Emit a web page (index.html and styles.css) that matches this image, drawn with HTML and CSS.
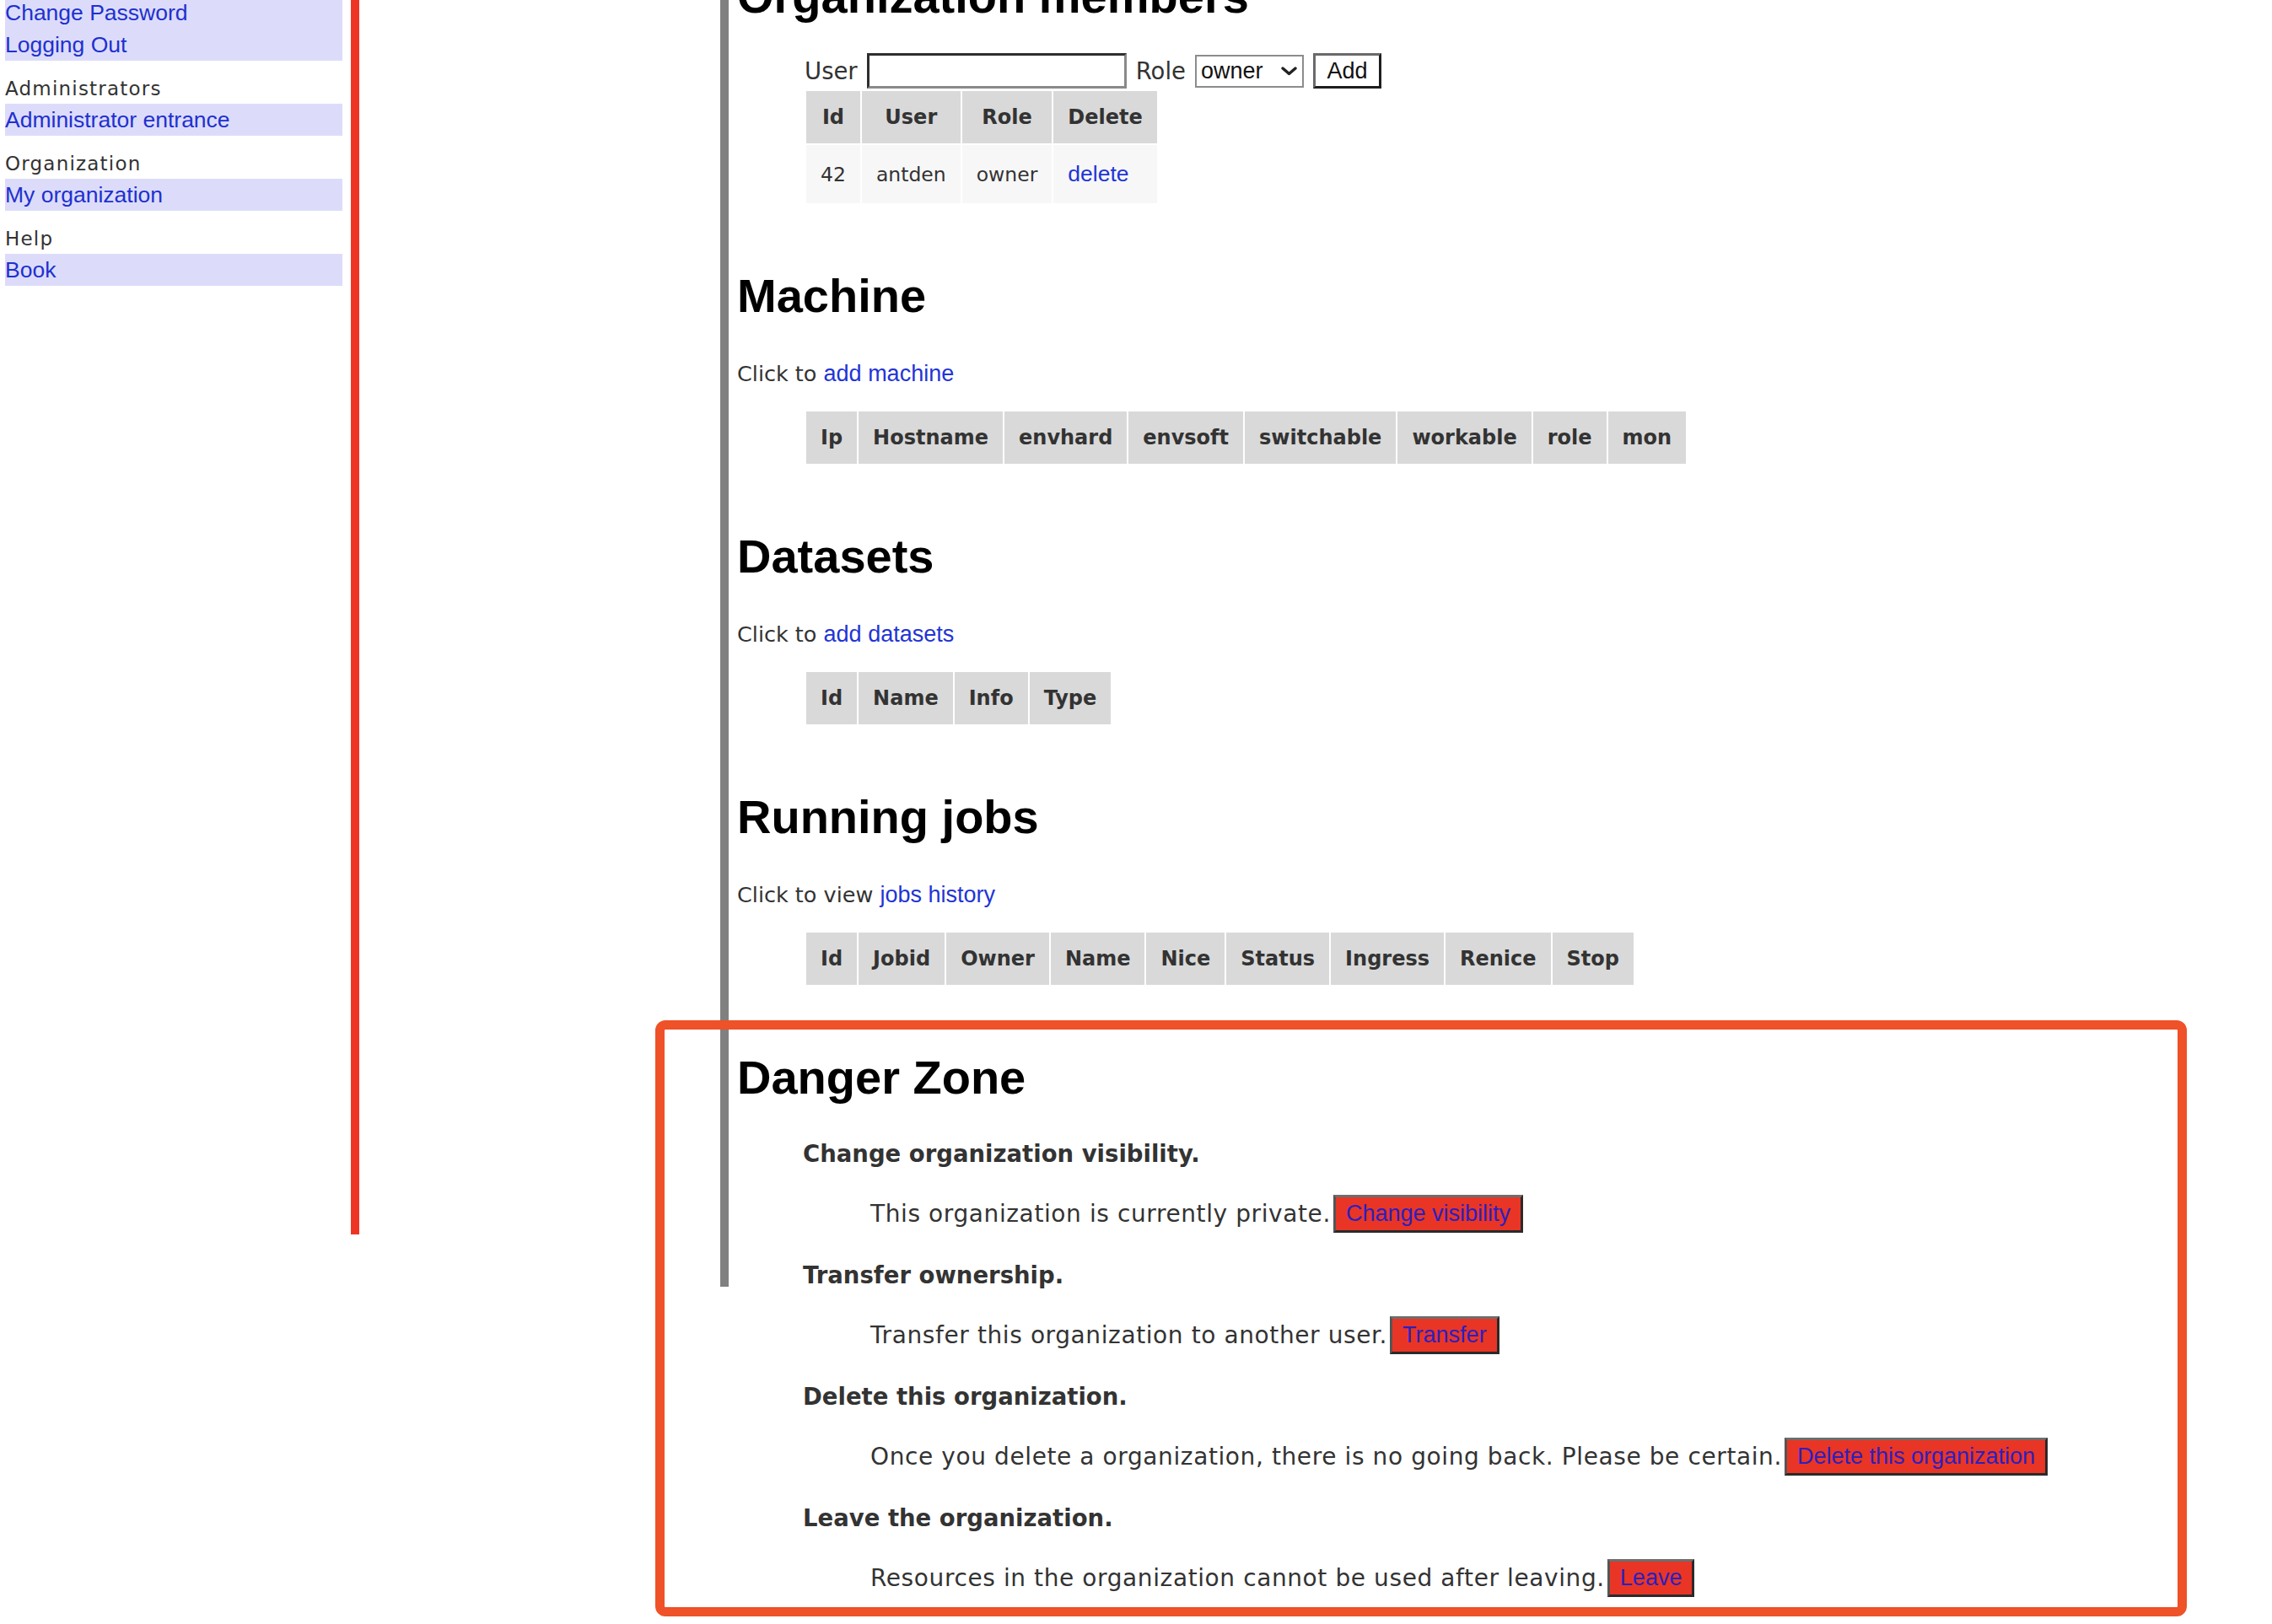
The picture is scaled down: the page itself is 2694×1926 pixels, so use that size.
FILE: index.html
```html
<!DOCTYPE html>
<html lang="en">
<head>
<meta charset="utf-8">
<title>My organization</title>
<link rel="stylesheet" href="styles.css">
</head>
<body>
<div class="page">
  <aside class="sidebar">
    <nav class="nav">
      <a class="nav-link" href="#">Change Password</a>
      <a class="nav-link" href="#">Logging Out</a>
      <div class="nav-label">Administrators</div>
      <a class="nav-link" href="#">Administrator entrance</a>
      <div class="nav-label">Organization</div>
      <a class="nav-link" href="#">My organization</a>
      <div class="nav-label">Help</div>
      <a class="nav-link" href="#">Book</a>
    </nav>
  </aside>
  <div class="rule"></div>
  <main class="content">
    <section class="section">
      <h2 class="title">Organization members</h2>
      <form class="member-form">
        <label class="form-label" for="user">User</label>
        <input class="text-input" id="user" type="text">
        <label class="form-label" for="role">Role</label>
        <span class="select-wrap">
          <select class="select" id="role"><option>owner</option><option>member</option></select>
          <svg class="chev" width="19" height="11" viewBox="0 0 19 11"><polyline points="2,2 9.5,8.5 17,2" fill="none" stroke="#222" stroke-width="3.4" stroke-linecap="round" stroke-linejoin="round"/></svg>
        </span>
        <button class="add-btn" type="button">Add</button>
      </form>
      <table class="grid grid-tight">
        <thead><tr><th>Id</th><th>User</th><th>Role</th><th>Delete</th></tr></thead>
        <tbody><tr><td>42</td><td>antden</td><td>owner</td><td><a class="link" href="#">delete</a></td></tr></tbody>
      </table>
    </section>

    <section class="section">
      <h2 class="title">Machine</h2>
      <p class="lead">Click to <a class="link" href="#">add machine</a></p>
      <table class="grid">
        <thead><tr><th>Ip</th><th>Hostname</th><th>envhard</th><th>envsoft</th><th>switchable</th><th>workable</th><th>role</th><th>mon</th></tr></thead>
      </table>
    </section>

    <section class="section">
      <h2 class="title">Datasets</h2>
      <p class="lead">Click to <a class="link" href="#">add datasets</a></p>
      <table class="grid">
        <thead><tr><th>Id</th><th>Name</th><th>Info</th><th>Type</th></tr></thead>
      </table>
    </section>

    <section class="section">
      <h2 class="title">Running jobs</h2>
      <p class="lead">Click to view <a class="link" href="#">jobs history</a></p>
      <table class="grid">
        <thead><tr><th>Id</th><th>Jobid</th><th>Owner</th><th>Name</th><th>Nice</th><th>Status</th><th>Ingress</th><th>Renice</th><th>Stop</th></tr></thead>
      </table>
    </section>

    <section class="section">
      <h2 class="title">Danger Zone</h2>
      <div class="danger-list">
        <div class="danger-item">
          <h4 class="danger-title">Change organization visibility.</h4>
          <div class="danger-row"><span>This organization is currently private.</span><button class="btn-danger" type="button">Change visibility</button></div>
        </div>
        <div class="danger-item">
          <h4 class="danger-title">Transfer ownership.</h4>
          <div class="danger-row"><span>Transfer this organization to another user.</span><button class="btn-danger" type="button">Transfer</button></div>
        </div>
        <div class="danger-item">
          <h4 class="danger-title">Delete this organization.</h4>
          <div class="danger-row"><span>Once you delete a organization, there is no going back. Please be certain.</span><button class="btn-danger" type="button">Delete this organization</button></div>
        </div>
        <div class="danger-item">
          <h4 class="danger-title">Leave the organization.</h4>
          <div class="danger-row"><span>Resources in the organization cannot be used after leaving.</span><button class="btn-danger" type="button">Leave</button></div>
        </div>
      </div>
    </section>
  </main>
</div>
<div class="annotation"></div>
</body>
</html>
```

FILE: styles.css
```css
* { box-sizing: border-box; }

html, body {
  margin: 0;
  padding: 0;
  background: #ffffff;
}

body {
  font-family: "DejaVu Sans", Verdana, sans-serif;
  color: #333333;
  overflow: hidden;
}

.page {
  display: flex;
  align-items: flex-start;
  margin-top: -60px;
}

/* ---------- sidebar ---------- */
.sidebar {
  flex: none;
  width: 426px;
  height: 1524px;
  padding: 56px 10px 0 6px;
  border-right: 10px solid #ee3524;
}

.nav {
  display: flex;
  flex-direction: column;
}

.nav-link {
  display: block;
  height: 38px;
  line-height: 38px;
  background: #dcdcfa;
  color: #2030d0;
  font-family: "Liberation Sans", Arial, sans-serif;
  font-size: 26.5px;
  text-decoration: none;
  white-space: nowrap;
}

.nav-label {
  margin: 18px 0 3px;
  line-height: 30px;
  font-size: 23px;
  letter-spacing: 1.2px;
  color: #333333;
}

.rule {
  flex: none;
  width: 10px;
  height: 1586px;
  margin-left: 428px;
  background: #808080;
}

/* ---------- content ---------- */
.content {
  flex: 1;
  padding: 24px 0 0 10px;
}

.section + .section {
  margin-top: 76px;
}

.title {
  margin: 0;
  font-family: "Liberation Sans", Arial, sans-serif;
  font-weight: bold;
  font-size: 56px;
  line-height: 64px;
  color: #000000;
}

.lead {
  margin: 42px 0 0;
  font-size: 25.5px;
  line-height: 36px;
  color: #333333;
}

.link {
  color: #2234d6;
  font-family: "Liberation Sans", Arial, sans-serif;
  font-size: 27px;
  text-decoration: none;
}

/* ---------- member form ---------- */
.member-form {
  display: flex;
  align-items: center;
  gap: 11px;
  margin: 35px 0 0 80px;
  height: 42px;
}

.form-label {
  font-size: 27.5px;
  color: #333333;
}

.text-input {
  width: 308px;
  height: 42px;
  margin: 0;
  padding: 0 6px;
  border: 3px solid;
  border-color: #2e2e2e #8a8a8a #8a8a8a #2e2e2e;
  background: #ffffff;
  font-size: 24px;
}

.select-wrap {
  position: relative;
  display: inline-block;
  height: 39px;
}

.select {
  -webkit-appearance: none;
  appearance: none;
  width: 129px;
  height: 39px;
  margin: 0;
  padding: 0 0 0 5px;
  border: 2px solid #8c8c8c;
  border-radius: 0;
  background: #ffffff;
  color: #111111;
  font-family: "Liberation Sans", Arial, sans-serif;
  font-size: 27px;
}

.chev {
  position: absolute;
  right: 8px;
  top: 14px;
  pointer-events: none;
}

.add-btn {
  width: 81px;
  height: 42px;
  margin: 0;
  padding: 0;
  border: 3px solid;
  border-color: #6a6a6a #1e1e1e #1e1e1e #6a6a6a;
  background: #ffffff;
  color: #111111;
  font-family: "Liberation Sans", Arial, sans-serif;
  font-size: 27px;
}

/* ---------- tables ---------- */
.grid {
  border-collapse: separate;
  border-spacing: 2px;
  margin: 25px 0 0 80px;
}

.grid-tight {
  margin-top: 1px;
}

.grid th {
  background: #d9d9d9;
  color: #333333;
  font-weight: bold;
  font-size: 24px;
  line-height: 30px;
  padding: 16px 17px;
  text-align: center;
  white-space: nowrap;
}

.grid td {
  background: #f7f7f7;
  color: #333333;
  font-size: 23.5px;
  line-height: 36px;
  padding: 16px 17px;
  text-align: left;
  white-space: nowrap;
}

.grid td .link {
  font-size: 26.5px;
}

/* ---------- danger zone ---------- */
.danger-list {
  display: flex;
  flex-direction: column;
  gap: 30px;
  margin: 38px 0 0 78px;
}

.danger-title {
  margin: 0;
  font-size: 27.5px;
  font-weight: bold;
  line-height: 40px;
  color: #333333;
}

.danger-row {
  display: flex;
  align-items: center;
  height: 46px;
  margin: 28px 0 0 80px;
  font-size: 28px;
  letter-spacing: 0.6px;
  color: #333333;
  white-space: nowrap;
}

.btn-danger {
  flex: none;
  height: 45px;
  margin: 0 0 0 3px;
  padding: 0 12px;
  border: 3px solid;
  border-color: #6e6e6e #2a2a2a #2a2a2a #555555;
  background: #e93525;
  color: #2b20c0;
  font-family: "Liberation Sans", Arial, sans-serif;
  font-size: 27px;
  letter-spacing: 0;
  line-height: 37px;
}

/* ---------- annotation overlay ---------- */
.annotation {
  position: absolute;
  left: 777px;
  top: 1210px;
  width: 1816px;
  height: 707px;
  border: 11px solid #ef5128;
  border-radius: 12px;
  pointer-events: none;
}
```
